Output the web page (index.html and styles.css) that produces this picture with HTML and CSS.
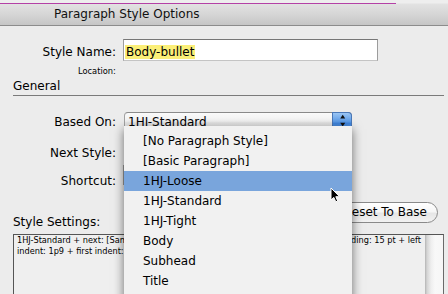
FILE: index.html
```
<!DOCTYPE html>
<html>
<head>
<meta charset="utf-8">
<title>Paragraph Style Options</title>
<link rel="stylesheet" href="styles.css">
</head>
<body>
<div class="window">
  <div class="titlebar">
    <div class="selection-line"></div>
    <div class="title">Paragraph Style Options</div>
  </div>
  <div class="content">
    <div class="field-row name-row">
      <span class="label">Style Name:</span>
      <div class="textfield"><span class="selected">Body-bullet</span></div>
    </div>
    <div class="location">Location:</div>
    <div class="section-title">General</div>
    <div class="field-row popup-row">
      <span class="label">Based On:</span>
      <div class="popup">
        <span class="popup-value">1HJ-Standard</span>
        <span class="stepper">
          <svg width="20" height="20" viewBox="0 0 20 20"><path d="M8.2 6.5 L13.2 6.5 L10.7 2.8 Z" fill="#111"/><path d="M8.2 10.8 L13.2 10.8 L10.7 14.4 Z" fill="#111"/></svg>
        </span>
        <ul class="menu">
          <li>[No Paragraph Style]</li>
          <li>[Basic Paragraph]</li>
          <li class="active">1HJ-Loose</li>
          <li>1HJ-Standard</li>
          <li>1HJ-Tight</li>
          <li>Body</li>
          <li>Subhead</li>
          <li>Title</li>
        </ul>
      </div>
    </div>
    <div class="field-row popup-row">
      <span class="label">Next Style:</span>
      <div class="popup"></div>
    </div>
    <div class="field-row popup-row">
      <span class="label">Shortcut:</span>
      <div class="shortcut-field"></div>
    </div>
    <div class="settings-head">
      <span class="settings-label">Style Settings:</span>
      <button class="reset">Reset To Base</button>
    </div>
    <div class="settings-box">
      <div class="settings-text">
        <div>1HJ-Standard + next: [Same style] + space before: 0p10.5 + tracking: -100 + leading: 15 pt + left</div>
        <div>indent: 1p9 + first indent: -1p9</div>
      </div>
      <div class="scrollbar"></div>
    </div>
  </div>
  <svg class="cursor" width="11" height="16" viewBox="0 0 11 16"><path d="M1 1 L1 13 L3.8 10.4 L5.8 14.8 L7.7 14 L5.8 9.7 L9.6 9.7 Z" fill="#000" stroke="#fff" stroke-width="1" stroke-linejoin="round"/></svg>
</div>
</body>
</html>
```
FILE: styles.css
```
* { box-sizing: border-box; }
html, body { margin: 0; padding: 0; }
body {
  width: 448px;
  height: 294px;
  overflow: hidden;
  background: #ececec;
  font-family: "DejaVu Sans", sans-serif;
  font-size: 12px;
  color: #000;
}
.window { position: relative; height: 294px; overflow: hidden; }

.titlebar {
  height: 26px;
  padding-top: 3px;
  background: linear-gradient(#eeeeee, #eeeeee 3px, #e2e2e2 4px, #d6d6d6 14px, #c6c6c6 25px);
  border-bottom: 1px solid #8c8c8c;
}
.selection-line { width: 396px; height: 1px; background: #b441a6; }
.title { line-height: 21px; padding-left: 54px; color: #111; }

.content { padding: 13px 4px 0 13px; }

.field-row { display: flex; align-items: baseline; }
.label { width: 103px; flex: none; text-align: right; line-height: 14px; }

.textfield {
  margin-left: 7px;
  width: 255px;
  height: 22px;
  background: #fff;
  border: 1px solid;
  border-color: #777 #9c9c9c #c4c4c4 #9c9c9c;
  padding: 5px 0 0 1px;
  line-height: 14px;
}
.selected { background: #fbef78; padding: 0 1px; }

.location { margin-top: 5px; padding-left: 65px; font-size: 8.3px; line-height: 10px; }

.section-title {
  margin-top: 3px;
  line-height: 15px;
  padding-bottom: 1px;
  border-bottom: 1px solid #7a7a7a;
}

.popup-row { margin-top: 5px; }
.section-title + .popup-row { margin-top: 16px; }

.popup {
  position: relative;
  margin-left: 8px;
  width: 228px;
  height: 20px;
  border: 1px solid #a2a2a2;
  border-top-color: #8a8a8a;
  border-radius: 4px 4px 0 0;
  background: linear-gradient(#fbfbfb, #f2f2f2 45%, #e6e6e6 55%, #f4f4f4);
  padding: 1px 0 0 3px;
  line-height: 14px;
}
.popup-value { display: inline-block; padding-top: 1px; }
.stepper {
  position: absolute;
  right: -1px;
  top: -1px;
  width: 20px;
  height: 20px;
  border-radius: 0 4px 0 0;
  background: linear-gradient(#9cc6f4, #5c9ce8 45%, #3f86e0 55%, #72aaee);
  border: 1px solid #4a78b8;
  border-bottom: none;
}
.stepper svg { position: absolute; left: -1px; top: -1px; }

.menu {
  position: absolute;
  left: -1px;
  top: 13px;
  width: 228px;
  height: 190px;
  margin: 0;
  padding: 5px 0 0 0;
  list-style: none;
  background: #f1f1f1;
  box-shadow: 0 3px 10px rgba(0, 0, 0, 0.55);
  z-index: 10;
}
.menu li { height: 20px; line-height: 20px; padding-left: 19px; }
.menu li.active { background: #79a5dc; }

.shortcut-field { margin-left: 7px; width: 120px; height: 20px; border: 1px solid #999; background: #fff; }

.settings-head {
  margin-top: 14px;
  height: 28px;
  display: flex;
  justify-content: space-between;
}
.settings-label { align-self: flex-end; line-height: 15px; }
.reset {
  align-self: flex-start;
  margin-right: 6px;
  height: 21px;
  padding: 0 10px;
  border: 1px solid #8a8a8a;
  border-radius: 11px;
  background: linear-gradient(#ffffff, #f6f6f6 45%, #e6e6e6 55%, #f2f2f2);
  font-family: "DejaVu Sans", sans-serif;
  font-size: 12px;
  line-height: 19px;
  color: #000;
}

.settings-box {
  margin-top: 4px;
  height: 80px;
  display: flex;
  border: 1px solid;
  border-color: #555 #6a6a6a #888 #555;
  background: #efefef;
}
.settings-text {
  flex: 1;
  padding-left: 3px;
  font-size: 8.2px;
  line-height: 11px;
  white-space: nowrap;
  overflow: hidden;
}
.scrollbar {
  width: 18px;
  flex: none;
  background: linear-gradient(to right, #b4b4b4, #d4d4d4 2px, #eeeeee 6px, #f8f8f8 10px, #f6f6f6);
}

.cursor { position: absolute; left: 330px; top: 187px; z-index: 20; }
```
